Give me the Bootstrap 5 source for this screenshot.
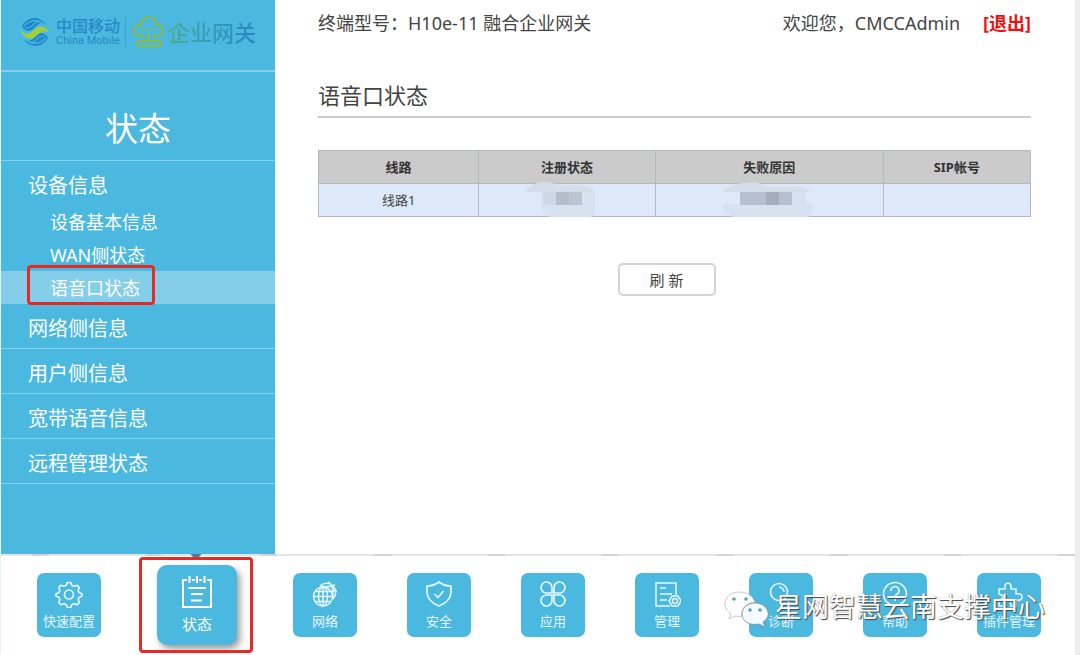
<!DOCTYPE html>
<html lang="zh-CN">
<head>
<meta charset="utf-8">
<meta name="viewport" content="width=device-width, initial-scale=1">
<title>融合企业网关 - 语音口状态</title>
<link href="https://cdn.jsdelivr.net/npm/bootstrap@5.3.0/dist/css/bootstrap.min.css" rel="stylesheet">
<style>
  body { font-family: "Noto Sans", "Noto Sans CJK SC", sans-serif; color: #444; background: #fff; }
  .page-shell { border-left: 1px solid #e4f3f9; border-right: 5px solid #eee; }
  a { text-decoration: none; }

  /* sidebar */
  .side-panel { width: 274px; background: #4bb8e0; color: #fff; }
  .side-panel a { color: #fff; }
  .logo-bar { height: 72px; padding: 0 19px 6px; border-bottom: 2px solid #85d0eb; }
  .cm-name { color: #2789c6; width: 64px; margin-left: 6px; white-space: nowrap; }
  .cm-zh { font-size: 16px; line-height: 17px; font-weight: 500; }
  .cm-en { font-size: 11px; line-height: 12px; font-family: Roboto, sans-serif; }
  .logo-rule { width: 1px; height: 28px; background: #3ca3cf; margin: 0 7px 0 5px; }
  .gw-name { font-size: 22px; line-height: 28px; font-weight: 500; margin-left: 4px; white-space: nowrap; color: transparent;
    background: linear-gradient(90deg, #55aa85, #3a9db5 40%, #2b84c4); -webkit-background-clip: text; background-clip: text; }
  .side-title { height: 89px; font-size: 33px; line-height: 40px; padding-top: 37px; border-bottom: 1px solid #85d0eb; }
  .menu-head { display: block; font-size: 20px; line-height: 38px; padding: 6px 0 0 27px; }
  .menu-line { border-bottom: 1px solid #85d0eb; }
  .menu-sub a { display: block; font-size: 18px; line-height: 31px; padding: 2px 0 0 49px; }
  .menu-sub .current { background: #84ceea; }
  .mark-box { border: 3px solid #e42c26; border-radius: 4px; pointer-events: none; }
  .mark-menu { left: 26px; top: -6px; width: 128px; height: 40px; }

  /* content */
  .content-area { padding: 9px 44px 0 43px; }
  .top-line { font-size: 18px; line-height: 28px; }
  .logout { color: #f01010; font-weight: 700; margin-left: 23px; }
  .page-title { font-size: 22px; line-height: 32px; margin: 42px 0 32px; padding-bottom: 5px; border-bottom: 2px solid #ccc; }
  .line-table { table-layout: fixed; font-size: 13px; line-height: 20px; margin-bottom: 46px; }
  .line-table th, .line-table td { border: 1px solid #b3babd; padding: 6px 4px; height: 33px; text-align: center; color: #444; }
  .line-table th { background: #cbcbcb; color: #333; }
  .line-table td { background: #dde9f9; }
  .c-line { width: 22.5%; } .c-reg { width: 24.8%; } .c-fail { width: 32%; }
  .smudge { left: 50%; top: -3px; transform: translateX(-50%); }
  .refresh-btn { width: 98px; height: 33px; padding: 0; font-size: 15px; line-height: 20px; color: #444; background: #fff; border: 2px solid #d4d4d4; border-radius: 5px; }

  /* bottom navigation */
  .dock { height: 101px; padding: 0 34px 0 36px; }
  .dock::before { content: ""; position: absolute; left: 0; right: 0; top: 0; height: 2px;
    background: repeating-linear-gradient(90deg, #e4e4e4 0 31px, #d4d4d4 31px 48px, #e4e4e4 48px 114px); }
  .tile { width: 64px; height: 64px; border-radius: 7px; background: #4bb8e0; color: #e4f7fe; font-size: 13px; line-height: 18px; padding-top: 7px; white-space: nowrap; }
  .tile svg { width: 28px; height: 28px; margin-bottom: 4px; }
  .tile-on { width: 80px; height: 80px; border-radius: 10px; margin: 0 6px; padding-top: 9px; font-size: 15px; line-height: 22px; color: #fff; box-shadow: 3px 4px 7px rgba(0,0,0,.4); }
  .tile-on svg { width: 36px; height: 36px; margin-bottom: 3px; }
  .mark-tile { left: -18px; top: -8px; width: 114px; height: 96px; }
  .dock-arrow { left: 33px; top: -11px; width: 12px; height: 7px; background: #527d95; clip-path: polygon(0 0, 100% 0, 50% 100%); }
  .sign { right: 30px; top: 32px; font-size: 27px; line-height: 42px; font-weight: 400; color: #fff; white-space: nowrap;
    text-shadow: 1px 1px 1px #444, 0 0 1px #777; pointer-events: none; }
  .sign svg { width: 46px; height: 40px; margin-right: 5px; }
</style>
<script src="https://cdn.jsdelivr.net/npm/bootstrap@5.3.0/dist/js/bootstrap.bundle.min.js"></script>
</head>
<body>
<div class="page-shell d-flex flex-column min-vh-100">
  <div class="d-flex flex-grow-1">
    <aside class="side-panel flex-shrink-0">
      <div class="logo-bar d-flex align-items-center">
        <svg width="30" height="32" viewBox="0 0 30 32" fill="none" aria-label="China Mobile">
          <g fill="#1f86cc">
            <path d="M2 10C7 2 17-2 26 8C20 5 17 9 14 12C10 16 5 16 2 10Z"/>
            <path d="M28 22C23 30 13 34 4 24C10 27 13 23 16 20C20 16 25 16 28 22Z"/>
          </g>
          <g stroke="#4bb8e0" stroke-width="1.200"><path d="M4 10Q13 1 23 7M5 12Q11 12 14 8T23 7M26 22Q17 31 7 25M25 20Q19 20 16 24T7 25"/></g>
          <path d="M0 13C5 20 10 18 14 14S24 8 29 16C24 14 20 16 16 20S5 25 0 13Z" fill="#a3cf3b"/>
        </svg>
        <div class="cm-name"><div class="cm-zh">中国移动</div><div class="cm-en">China Mobile</div></div>
        <div class="logo-rule"></div>
        <svg width="31" height="32" viewBox="0 0 31 32" fill="none" stroke="#8fba3c" stroke-width="2.2" stroke-linecap="round" aria-hidden="true">
          <path d="M11 20H8C-1 20-1 9 7 9C8-1 23-1 24 9C32 9 32 20 24 20H20M15.500 18V25"/>
          <rect x="4" y="25" width="24" height="5" rx="2.500"/>
          <path d="M10 13H10.100M15.500 13H15.600M21 13H21.100" stroke-width="2.600"/>
        </svg>
        <div class="gw-name">企业网关</div>
      </div>
      <div class="side-title text-center">状态</div>
      <nav>
        <a href="#" class="menu-head">设备信息</a>
        <div class="menu-sub">
          <a href="#">设备基本信息</a>
          <a href="#">WAN侧状态</a>
          <a href="#" class="current position-relative">语音口状态<span class="mark-box mark-menu position-absolute"></span></a>
        </div>
        <a href="#" class="menu-head menu-line">网络侧信息</a>
        <a href="#" class="menu-head menu-line">用户侧信息</a>
        <a href="#" class="menu-head menu-line">宽带语音信息</a>
        <a href="#" class="menu-head menu-line">远程管理状态</a>
      </nav>
    </aside>

    <main class="content-area flex-grow-1">
      <div class="top-line d-flex justify-content-between">
        <span>终端型号：H10e-11 融合企业网关</span>
        <span>欢迎您，CMCCAdmin<a href="#" class="logout">[退出]</a></span>
      </div>
      <h1 class="page-title fw-normal">语音口状态</h1>
      <table class="line-table w-100">
        <thead>
          <tr><th class="c-line">线路</th><th class="c-reg">注册状态</th><th class="c-fail">失败原因</th><th>SIP帐号</th></tr>
        </thead>
        <tbody>
          <tr>
            <td>线路1</td>
            <td class="position-relative">
              <svg class="smudge position-absolute" width="84" height="37" viewBox="0 0 84 37" aria-hidden="true">
                <path d="M16 11H70V31Q70 36 64 36H28Q17 36 16 24Z" fill="#d7e2f0"/>
                <path d="M0 11Q8-1 24 1Q34 5 50 4Q66 4 70 11Z" fill="#d3dee8"/>
                <path d="M18 11H57V24H18Z" fill="#cdd8e7"/><path d="M31 11H57V24H31Z" fill="#b5bdcc"/><path d="M44 11H57V24H44Z" fill="#bcc4d2"/>
              </svg>
            </td>
            <td class="position-relative">
              <svg class="smudge position-absolute" width="94" height="37" viewBox="0 0 94 37" aria-hidden="true">
                <path d="M0 23H90V31Q90 36 84 36H12Q4 35 0 23Z" fill="#d7e2f1"/>
                <path d="M0 11Q9 2 24 2Q36 0 46 6H66Q82 4 88 11Z" fill="#d3dee8"/>
                <path d="M18 11H84V24H18Z" fill="#d7e2f0"/><path d="M18 11H70V24H18Z" fill="#b8c0cf"/><path d="M44 11H57V24H44Z" fill="#a6adbc"/>
              </svg>
            </td>
            <td></td>
          </tr>
        </tbody>
      </table>
      <div class="text-center pe-3"><button type="button" class="btn refresh-btn">刷 新</button></div>
    </main>
  </div>

  <nav class="dock position-relative d-flex align-items-center justify-content-between flex-shrink-0">
    <a href="#" class="tile d-flex flex-column align-items-center">
      <svg viewBox="0 0 28 28" fill="none" stroke="currentColor" stroke-width="1.700" stroke-linejoin="round"><path d="M12.500 2.500h3l1.500 3 2 .8 3.200-1 2 2-1 3.200.8 2 3 1.500v2l-3 1.500-.8 2 1 3.200-2 2-3.200-1-2 .8-1.500 3h-3l-1.500-3-2-.8-3.200 1-2-2 1-3.200-.8-2-3-1.500v-2l3-1.500.8-2-1-3.200 2-2 3.200 1 2-.8z"/><circle cx="14" cy="14.500" r="4.500"/></svg>快速配置</a>
    <a href="#" class="tile tile-on position-relative d-flex flex-column align-items-center">
      <svg viewBox="0 0 36 36" fill="none" stroke="currentColor" stroke-width="2"><path d="M8 6H4V33H32V6H28M13 6H16M20 6H23M10.500 2V9M18 2V9M25.500 2V9M9 14H27M12 20H24M12 26.500H23"/></svg>状态
      <span class="dock-arrow position-absolute"></span>
      <span class="mark-box mark-tile position-absolute"></span></a>
    <a href="#" class="tile d-flex flex-column align-items-center">
      <svg viewBox="0 0 28 28" fill="none" stroke="currentColor" stroke-width="1.500"><path d="M9 6A9 9 0 1 1 22 19M17 2Q22 5 22 11V19M10 6Q16 8 24 5M20 11H26"/><circle cx="12" cy="16.500" r="9.500"/><ellipse cx="12" cy="16.500" rx="4.500" ry="9.500"/><path d="M12 7V26M2.500 16.500H21.500M4 11.500H20M4 21.500H20"/></svg>网络</a>
    <a href="#" class="tile d-flex flex-column align-items-center">
      <svg viewBox="0 0 28 28" fill="none" stroke="currentColor" stroke-width="1.700" stroke-linejoin="round"><path d="M14 2Q19 6 26 6V12Q26 21 14 26Q2 21 2 12V6Q9 6 14 2ZM9.500 14L13 17.500L18.500 11"/></svg>安全</a>
    <a href="#" class="tile d-flex flex-column align-items-center">
      <svg viewBox="0 0 28 28" fill="none" stroke="currentColor" stroke-width="1.700"><path d="M13 13H8A5.500 5.500 0 1 1 13 8ZM15 13V8A5.500 5.500 0 1 1 20 13ZM13 15V20A5.500 5.500 0 1 1 8 15ZM15 15H20A5.500 5.500 0 1 1 15 20Z"/></svg>应用</a>
    <a href="#" class="tile d-flex flex-column align-items-center">
      <svg viewBox="0 0 28 28" fill="none" stroke="currentColor" stroke-width="1.500"><path d="M17 26H3V3H23V15M7 8H13M7 14H19M7 20H14"/><path d="M19 16H25L28 21L25 26H19L16 21Z"/><circle cx="22" cy="21" r="2.500"/></svg>管理</a>
    <a href="#" class="tile d-flex flex-column align-items-center">
      <svg viewBox="0 0 28 28" fill="none" stroke="currentColor" stroke-width="1.600"><circle cx="12" cy="12" r="8.500"/><path d="M18 18L25 26M12 7A5 5 0 0 1 17 12"/></svg>诊断</a>
    <a href="#" class="tile d-flex flex-column align-items-center">
      <svg viewBox="0 0 28 28" fill="none" stroke="currentColor" stroke-width="1.600"><circle cx="14" cy="14" r="11.500"/><path d="M10 11A4 4 0 1 1 16 14Q14 15 14 17M14 19V21"/></svg>帮助</a>
    <a href="#" class="tile d-flex flex-column align-items-center">
      <svg viewBox="0 0 28 28" fill="none" stroke="currentColor" stroke-width="1.600" stroke-linejoin="round"><path d="M10 9V5Q13 1 16 5V9H21V14Q27 13 27 17T21 20V26H16Q16 21 13 21T10 26H4V20Q8 19 8 17T4 14V9Z"/></svg>插件管理</a>

    <div class="sign position-absolute d-flex align-items-center">
      <svg viewBox="0 0 46 40" aria-hidden="true">
        <path d="M15 5C6 5 1 11 1 17C1 21 3 24 7 27L5 32L11 29Q14 30 18 29C17 20 24 15 31 16C29 8 22 5 15 5Z" fill="#fff" stroke="#bbb" stroke-width=".8"/>
        <path d="M31 16C23 16 18 21 18 27C18 34 25 39 35 37L41 40L39 35C43 32 45 29 44 25C43 20 38 16 31 16Z" fill="#f2fbff" stroke="#888" stroke-width=".8"/>
        <g fill="#5a9fbd"><circle cx="10" cy="12" r="1.800"/><circle cx="22" cy="12" r="1.800"/><circle cx="26" cy="23" r="1.800"/><circle cx="36" cy="23" r="1.800"/></g>
      </svg>
      <span>星网智慧云南支撑中心</span>
    </div>
  </nav>
</div>
</body>
</html>
